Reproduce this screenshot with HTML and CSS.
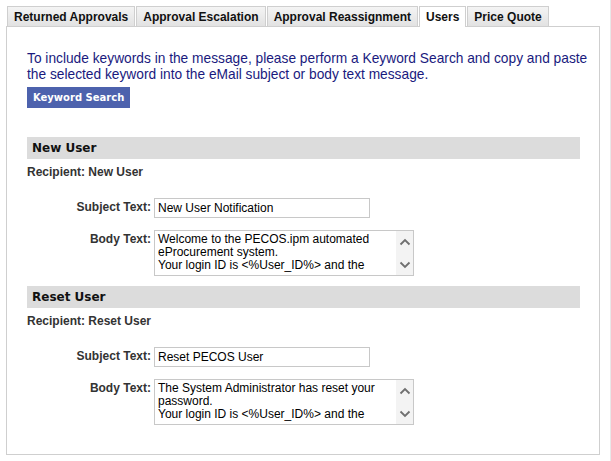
FILE: index.html
```html
<!DOCTYPE html>
<html>
<head>
<meta charset="utf-8">
<link rel="stylesheet" href="styles.css">
</head>
<body>
<div class="page">
  <div class="tabs">
    <div class="tab">Returned Approvals</div>
    <div class="tab">Approval Escalation</div>
    <div class="tab">Approval Reassignment</div>
    <div class="tab active">Users</div>
    <div class="tab">Price Quote</div>
  </div>
  <div class="panel">
    <p class="intro">To include keywords in the message, please perform a Keyword Search and copy and paste the selected keyword into the eMail subject or body text message.</p>
    <div class="btn">Keyword Search</div>

    <div class="section first">
      <div class="bar">New User</div>
      <div class="recipient">Recipient: New User</div>
      <div class="row subj">
        <div class="label">Subject Text:</div>
        <div class="input">New User Notification</div>
      </div>
      <div class="row">
        <div class="label">Body Text:</div>
        <div class="textarea">
          <div class="ta-text">Welcome to the PECOS.ipm automated eProcurement system.<br>Your login ID is &lt;%User_ID%&gt; and the</div>
          <div class="ta-scroll">
            <svg width="12" height="8" viewBox="0 0 12 8"><path d="M1.5 6.5 L6 2 L10.5 6.5" fill="none" stroke="#6f6f6f" stroke-width="1.8"/></svg>
            <svg width="12" height="8" viewBox="0 0 12 8"><path d="M1.5 1.5 L6 6 L10.5 1.5" fill="none" stroke="#6f6f6f" stroke-width="1.8"/></svg>
          </div>
        </div>
      </div>
    </div>

    <div class="section">
      <div class="bar">Reset User</div>
      <div class="recipient">Recipient: Reset User</div>
      <div class="row subj">
        <div class="label">Subject Text:</div>
        <div class="input">Reset PECOS User</div>
      </div>
      <div class="row">
        <div class="label">Body Text:</div>
        <div class="textarea">
          <div class="ta-text">The System Administrator has reset your password.<br>Your login ID is &lt;%User_ID%&gt; and the</div>
          <div class="ta-scroll">
            <svg width="12" height="8" viewBox="0 0 12 8"><path d="M1.5 6.5 L6 2 L10.5 6.5" fill="none" stroke="#6f6f6f" stroke-width="1.8"/></svg>
            <svg width="12" height="8" viewBox="0 0 12 8"><path d="M1.5 1.5 L6 6 L10.5 1.5" fill="none" stroke="#6f6f6f" stroke-width="1.8"/></svg>
          </div>
        </div>
      </div>
    </div>
  </div>
</div>
<div class="edge"></div>
</body>
</html>
```
FILE: styles.css
```css
html, body {
  margin: 0;
  padding: 0;
  background: #fff;
  font-family: "Liberation Sans", Arial, sans-serif;
}
.page {
  padding: 6px 0 0 6px;
  width: 594px;
}
.edge {
  position: absolute;
  top: 0;
  right: 0;
  width: 1px;
  height: 461px;
  background: #e8e8e8;
}
.tabs {
  display: flex;
  gap: 1px;
  padding-left: 1px;
  height: 20px;
  position: relative;
  z-index: 1;
}
.tab {
  height: 19px;
  line-height: 20px;
  padding: 0 6px;
  border: 1px solid #cfcfcf;
  border-bottom: none;
  background: linear-gradient(#f4f4f4, #e2e2e2);
  font-size: 12px;
  font-weight: bold;
  color: #111;
  white-space: nowrap;
}
.tab.active {
  background: #fff;
  height: 20px;
}
.panel {
  border: 1px solid #cfcfcf;
  height: 427px;
  padding: 0 19px 0 20px;
}
.intro {
  margin: 24px -12px 0 0;
  font-size: 13.75px;
  line-height: 16px;
  color: #1a1a7e;
}
.btn {
  display: inline-block;
  margin-top: 4px;
  height: 21px;
  line-height: 21px;
  padding: 0 6px;
  background: #4d62ad;
  color: #fff;
  font-weight: bold;
  font-size: 10px;
  font-family: "DejaVu Sans", Verdana, sans-serif;
}
.section.first {
  margin-top: 29px;
}
.section {
  margin-top: 10px;
}
.bar {
  height: 22px;
  line-height: 23px;
  background: #dcdcdc;
  padding-left: 5px;
  font-family: "DejaVu Sans", Verdana, sans-serif;
  font-weight: bold;
  font-size: 12px;
  color: #111;
}
.recipient {
  margin-top: 6px;
  font-size: 12px;
  font-weight: bold;
  color: #333;
  line-height: 14px;
}
.row {
  display: flex;
  align-items: flex-start;
}
.row.subj {
  margin-top: 19px;
  margin-bottom: 12px;
}
.label {
  width: 124px;
  text-align: right;
  padding-right: 3px;
  font-size: 12px;
  font-weight: bold;
  color: #333;
  line-height: 19px;
}
.input {
  width: 211px;
  height: 18px;
  border: 1px solid #c8c8c8;
  padding-left: 3px;
  font-size: 12px;
  line-height: 19px;
  color: #000;
}
.textarea {
  width: 258px;
  height: 44px;
  border: 1px solid #c8c8c8;
  display: flex;
  overflow: hidden;
}
.ta-text {
  flex: 1;
  padding: 2px 0 0 3px;
  font-size: 12px;
  line-height: 13px;
  color: #000;
}
.ta-scroll {
  width: 17px;
  background: #f3f3f3;
  display: flex;
  flex-direction: column;
  justify-content: space-between;
  align-items: center;
  padding: 7px 0 6px;
}
```
